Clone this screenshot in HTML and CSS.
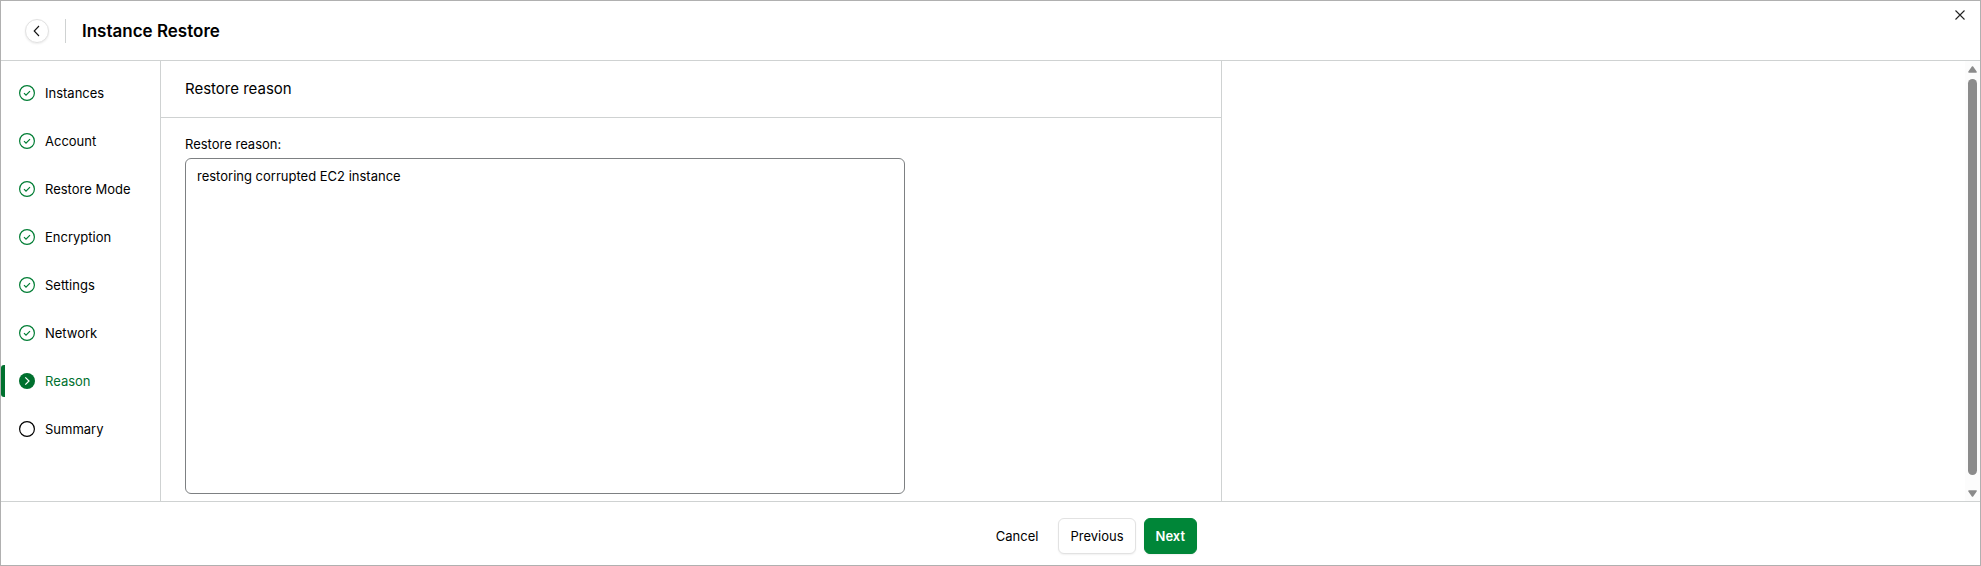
FILE: index.html
```
<!DOCTYPE html>
<html lang="en">
	<head>
		<meta charset="UTF-8" />
		<meta name="viewport" content="width=device-width" />
		<title>Instance Restore</title>
		<link rel="stylesheet" href="styles.css">
	</head>
	<body>
		<!-- shared icons -->
		<svg class="sprite" aria-hidden="true">
			<symbol id="icon-done" viewBox="0 0 16 16">
				<circle cx="8" cy="8" r="7.4" fill="none" stroke="currentColor" stroke-width="1.2"/>
				<path d="M5 8.2l2 2 4-4" fill="none" stroke="currentColor" stroke-width="1.2"/>
			</symbol>
			<symbol id="icon-current" viewBox="0 0 16 16">
				<circle cx="8" cy="8" r="8" fill="currentColor"/>
				<path d="M6.3 4.3L10 8l-3.7 3.7" fill="none" stroke="#fff" stroke-width="1.2"/>
			</symbol>
			<symbol id="icon-todo" viewBox="0 0 16 16">
				<circle cx="8" cy="8" r="7.4" fill="none" stroke="currentColor" stroke-width="1.2"/>
			</symbol>
		</svg>

		<div class="window">
			<header class="header">
				<button class="back" type="button" aria-label="Back">
					<svg width="12" height="12" viewBox="0 0 12 12"><path d="M8 1L3.2 6 8 11" fill="none" stroke="#111" stroke-width="1.1"/></svg>
				</button>
				<h1 class="title">Instance Restore</h1>
				<button class="close" type="button" aria-label="Close">
					<svg width="10" height="10" viewBox="0 0 10 10"><path d="M.5.5l9 9M9.5.5l-9 9" fill="none" stroke="#222" stroke-width="1.1"/></svg>
				</button>
			</header>

			<div class="body">
				<nav class="steps">
					<a class="step done" href="#instances"><svg class="icon"><use href="#icon-done"/></svg>Instances</a>
					<a class="step done" href="#account"><svg class="icon"><use href="#icon-done"/></svg>Account</a>
					<a class="step done" href="#mode"><svg class="icon"><use href="#icon-done"/></svg>Restore Mode</a>
					<a class="step done" href="#encryption"><svg class="icon"><use href="#icon-done"/></svg>Encryption</a>
					<a class="step done" href="#settings"><svg class="icon"><use href="#icon-done"/></svg>Settings</a>
					<a class="step done" href="#network"><svg class="icon"><use href="#icon-done"/></svg>Network</a>
					<a class="step current" href="#reason"><svg class="icon"><use href="#icon-current"/></svg>Reason</a>
					<a class="step" href="#summary"><svg class="icon"><use href="#icon-todo"/></svg>Summary</a>
				</nav>

				<main class="panel">
					<h2 class="panel-title">Restore reason</h2>
					<form class="form">
						<label class="label" for="reason">Restore reason:</label>
						<textarea class="reason" id="reason" spellcheck="false">restoring corrupted EC2 instance</textarea>
					</form>
				</main>

				<div class="scrollbar" aria-hidden="true">
					<svg width="9" height="7" viewBox="0 0 9 7"><path d="M4.5 1L8 6H1z" fill="#8b8b8b" stroke="#8b8b8b" stroke-width="1.6" stroke-linejoin="round"/></svg>
					<div class="thumb"></div>
					<svg width="9" height="7" viewBox="0 0 9 7"><path d="M4.5 6L8 1H1z" fill="#8b8b8b" stroke="#8b8b8b" stroke-width="1.6" stroke-linejoin="round"/></svg>
				</div>
			</div>

			<footer class="footer">
				<div class="actions">
					<button class="btn link" type="button">Cancel</button>
					<button class="btn" type="button">Previous</button>
					<button class="btn primary" type="button">Next</button>
				</div>
			</footer>
		</div>
	</body>
</html>
```
FILE: styles.css
```
* {
	box-sizing: border-box;
}

body {
	margin: 0;
	color: #000;
	background: #fff;
	font: 13px/20px Inter, "Liberation Sans", sans-serif;
}

button, textarea {
	font: inherit;
	color: inherit;
}

button {
	cursor: pointer;
}

.sprite {
	display: none;
}

.window {
	display: flex;
	flex-direction: column;
	min-height: 100vh;
	border: 1px solid #b0b0b0;
}

/* header */
.header {
	display: flex;
	align-items: center;
	padding: 18px 15px 17px 24px;
	border-bottom: 1px solid #cfd2d2;
}

.back {
	display: flex;
	align-items: center;
	justify-content: center;
	width: 24px;
	height: 24px;
	padding: 0;
	border: 1px solid #e2e2e2;
	border-radius: 50%;
	background: #fff;
	box-shadow: 0 1px 2px rgba(0, 0, 0, 0.08);
}

.title {
	margin: 0 0 0 16px;
	padding-left: 16px;
	border-left: 1px solid #cfd2d2;
	font-size: 17px;
	line-height: 24px;
	font-weight: 600;
}

.close {
	display: flex;
	align-self: flex-start;
	margin: -9px 0 0 auto;
	padding: 0;
	border: 0;
	background: none;
}

/* body */
.body {
	display: flex;
	flex: 1;
}

.steps {
	flex: none;
	width: 160px;
	padding-top: 8px;
	border-right: 1px solid #cfd2d2;
}

.step {
	display: flex;
	align-items: center;
	gap: 10px;
	height: 32px;
	margin: 8px 0 16px;
	padding-left: 18px;
	color: inherit;
	text-decoration: none;
}

.icon {
	width: 16px;
	height: 16px;
}

.done .icon {
	color: #007d34;
}

.current {
	padding-left: 14px;
	border-left: 4px solid #00702e;
	border-radius: 3px;
	color: #00702e;
}

.panel {
	display: flex;
	flex-direction: column;
	flex: 0 1 1061px;
	border-right: 1px solid #cfd2d2;
}

.panel-title {
	margin: 0;
	padding: 18px 24px;
	border-bottom: 1px solid #cfd2d2;
	font-size: 15px;
	font-weight: 400;
}

.form {
	display: flex;
	flex: 1;
	flex-direction: column;
	gap: 4px;
	padding: 16px 24px 7px;
}

.reason {
	flex: 1;
	width: 100%;
	max-width: 720px;
	padding: 7px 11px;
	border: 1px solid #7d8082;
	border-radius: 6px;
	outline: none;
	resize: none;
	background: #fff;
}

.scrollbar {
	display: flex;
	flex-direction: column;
	align-items: center;
	gap: 6px;
	width: 15px;
	margin-left: auto;
	padding: 5px 0 4px;
	background: #fcfcfc;
}

.thumb {
	flex: 1;
	width: 9px;
	border-radius: 5px;
	background: #8b8b8b;
}

.scrollbar svg:last-child {
	margin-top: 9px;
}

/* footer */
.footer {
	padding: 16px 0 11px;
	border-top: 1px solid #cfd2d2;
}

.actions {
	display: flex;
	justify-content: flex-end;
	gap: 8px;
	max-width: 1220px;
	padding-right: 24px;
}

.btn {
	height: 36px;
	padding: 0 11px;
	border: 1px solid #e2e2e2;
	border-radius: 6px;
	background: #fff;
	box-shadow: 0 1px 2px rgba(0, 0, 0, 0.06);
}

.link {
	border-color: transparent;
	box-shadow: none;
}

.primary {
	border-color: #008638;
	background: #008638;
	color: #fff;
	font-weight: 600;
}
```
